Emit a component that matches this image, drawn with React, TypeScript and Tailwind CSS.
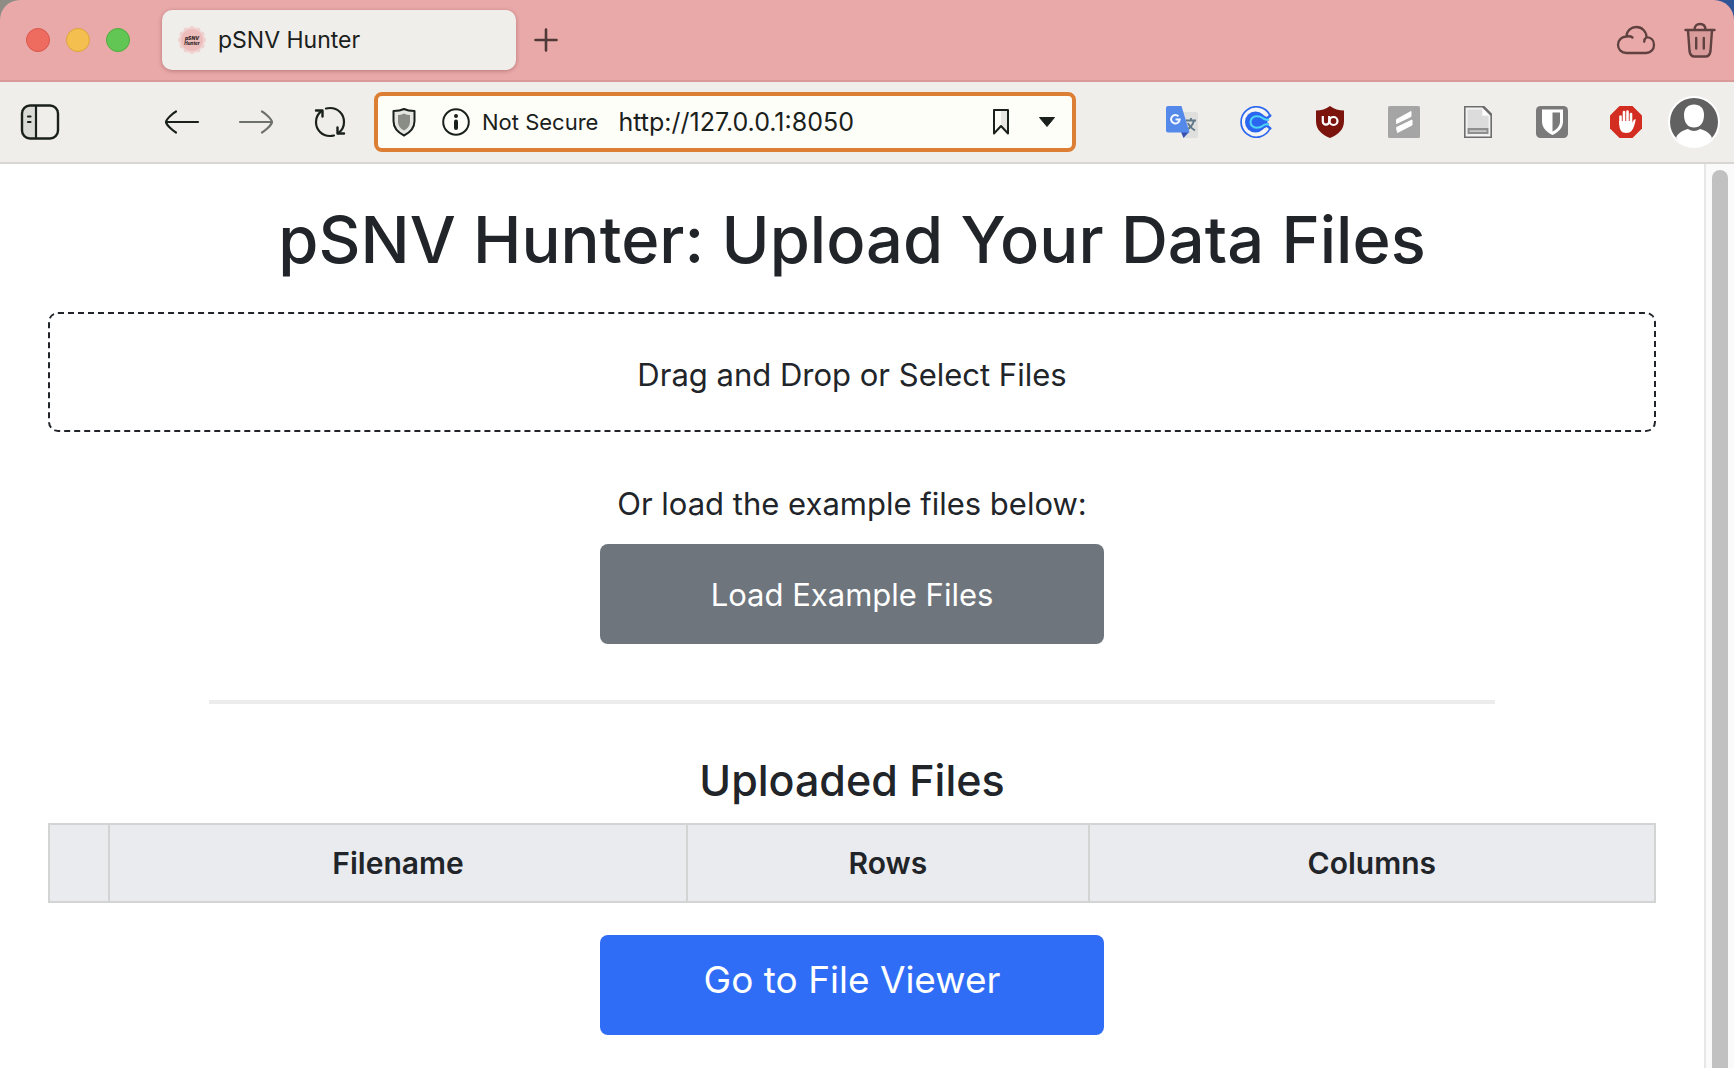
import type { ReactNode } from "react";

const INK = "#1a211c";

function Svg({ w, h, children, className }: { w: number; h: number; children: ReactNode; className?: string }) {
  return (
    <svg width={w} height={h} viewBox={`0 0 ${w} ${h}`} fill="none" aria-hidden="true" className={className ?? "shrink-0"}>
      {children}
    </svg>
  );
}

function Favicon() {
  const petals = Array.from({ length: 12 }, (_, i) => {
    const a = (i * Math.PI) / 6;
    return { x: 14 + 11 * Math.cos(a), y: 15 + 11 * Math.sin(a) };
  });
  return (
    <svg width="28" height="30" viewBox="0 0 28 30" aria-hidden="true" className="shrink-0">
      {petals.map((p, i) => (
        <circle key={i} cx={p.x} cy={p.y} r="3" fill="#efd2cf" />
      ))}
      <circle cx="14" cy="15" r="11" fill="#ecbdbb" />
      <text x="14" y="14.5" textAnchor="middle" fontSize="5" fontWeight="800" fontStyle="italic" fontFamily="Inter, sans-serif" fill="#2b2022">pSNV</text>
      <text x="14" y="19.5" textAnchor="middle" fontSize="4.500" fontWeight="800" fontStyle="italic" fontFamily="Inter, sans-serif" fill="#2b2022">Hunter</text>
    </svg>
  );
}

function TabBar() {
  return (
    <header className="flex h-[82px] items-center rounded-t-[20px] border-b-2 border-[#d99a9a] bg-[#e9a9a8] pl-[26px] pr-[18px]">
      <div className="flex gap-4">
        <button aria-label="Close window" className="size-6 rounded-full border border-[#d9564b] bg-[#ed6b5f]" />
        <button aria-label="Minimise window" className="size-6 rounded-full border border-[#dba33c] bg-[#f5bf4f]" />
        <button aria-label="Zoom window" className="size-6 rounded-full border border-[#4eab3d] bg-[#61c654]" />
      </div>
      <button className="ml-8 flex h-[60px] w-[354px] items-center gap-3 rounded-[10px] bg-[#f0eeea] pl-4 text-left text-[23px] text-[#1a211c] shadow-[0_1px_4px_rgba(90,30,30,0.35)]">
        <Favicon />
        <span>pSNV Hunter</span>
      </button>
      <button aria-label="New tab" className="ml-[18px]">
        <Svg w={24} h={24}>
          <path d="M12 1.5v21M1.5 12h21" stroke="#4f3837" strokeWidth="2.6" strokeLinecap="round" />
        </Svg>
      </button>
      <div className="ml-auto flex items-center gap-7">
        <button aria-label="Synced tabs">
          <Svg w={40} h={30}>
            <path d="M10.5 28C5.500 28 2 24.500 2 19.800C2 15 5.800 11.500 10.500 11.500C10.500 6 15 2 20.500 2C26 2 30.500 6.500 30.500 12.200C35 12.200 38 15.500 38 20C38 24.500 34.500 28 30 28ZM10.500 11.500C13 11 15 11.300 16.500 12.500M30.500 12.200C29 13.200 28.200 14.800 28.200 16.800" stroke="#5f4140" strokeWidth="2.300" strokeLinecap="round" strokeLinejoin="round" />
          </Svg>
        </button>
        <button aria-label="Closed tabs">
          <Svg w={32} h={36}>
            <path d="M3.500 8.500L6 30C6.300 33 8 34.500 10.500 34.500H21.500C24 34.500 25.700 33 26 30L28.500 8.500Z" fill="#d99c9b" />
            <path d="M1.500 8h29M10.500 8C10.500 4 12.500 2 16 2S21.500 4 21.500 8M4 8.500L5.500 29C6 33 8 34.500 10.500 34.500H21.500C24 34.500 26 33 26.500 29L28 8.500M12.200 16v10.500M19.800 16v10.500" stroke="#5f4140" strokeWidth="2.400" strokeLinecap="round" />
          </Svg>
        </button>
      </div>
    </header>
  );
}

function AddressBar() {
  return (
    <div className="ml-7 flex h-[60px] min-w-0 flex-1 items-center rounded-lg border-4 border-[#dc7f34] bg-[#fefef8] pl-[14px] pr-4 text-[#1a211c]">
      <button aria-label="Tracker blocking">
        <Svg w={24} h={30}>
          <path d="M12 2C9 3.500 5.500 4 1.500 4V14C1.500 21 6 25.500 12 28.500C18 25.500 22.500 21 22.500 14V4C18.500 4 15 3.500 12 2Z" fill="#e6e7e2" stroke={INK} strokeWidth="2" strokeLinejoin="round" />
          <path d="M12 6.500C10 7.500 8 8 6 8V14.500C6 19 8.500 21.500 12 23.500C15.500 21.500 18 19 18 14.500V8C16 8 14 7.500 12 6.500Z" fill="#8a8d86" />
        </Svg>
      </button>
      <button className="ml-[26px] flex items-center gap-3 text-[22px] whitespace-nowrap">
        <Svg w={28} h={28}>
          <circle cx="14" cy="14" r="12.800" stroke={INK} strokeWidth="2" />
          <circle cx="14" cy="8" r="2" fill={INK} />
          <path d="M14 13.500v6.500" stroke={INK} strokeWidth="4" strokeLinecap="round" />
        </Svg>
        <span>Not Secure</span>
      </button>
      <input aria-label="Address" defaultValue="http://127.0.0.1:8050" className="ml-5 min-w-0 flex-1 bg-transparent pt-0.5 text-[25px] outline-none" />
      <button aria-label="Bookmark page">
        <Svg w={18} h={28}>
          <path d="M9 2h7v23l-7-7z" fill="#e6e7e2" />
          <path d="M2 2h14v23.500l-7-7.500l-7 7.500z" stroke={INK} strokeWidth="2" strokeLinejoin="round" />
        </Svg>
      </button>
      <button aria-label="Address history" className="ml-7">
        <Svg w={18} h={12}>
          <path d="M1.500 1.500h15l-7.500 9z" fill={INK} stroke={INK} strokeLinejoin="round" />
        </Svg>
      </button>
    </div>
  );
}

const extensions: { name: string; icon: ReactNode }[] = [
  {
    name: "Google Translate",
    icon: (
      <>
        <path d="M12 6h18a2 2 0 0 1 2 2v22a2 2 0 0 1-2 2H18z" fill="#dfdfde" />
        <path d="M20 14.500h10M25 12v2.500M28 14.500c-1 4-4 7.500-7.500 9.500M22 17c1 3 4 5.500 7 7.500" stroke="#607988" strokeWidth="1.900" />
        <path d="M15 26h8l-5.500 6z" fill="#3a50b0" />
        <path d="M2 0h13.500L23.500 26.500H2a2 2 0 0 1-2-2V2a2 2 0 0 1 2-2z" fill="#5489ea" />
        <path d="M12.500 10.200A4.300 4.300 0 1 0 13.700 13.500H9.500" stroke="#f4f7fe" strokeWidth="2" />
      </>
    ),
  },
  {
    name: "Calendly",
    icon: (
      <>
        <circle cx="16" cy="16" r="14" fill="#f4f5f4" />
        <path d="M30 9.500A15.200 15.200 0 1 0 30 22.500" stroke="#2a66f0" strokeWidth="1.700" />
        <path d="M24 7.500L31 9.500V22.500L24 24.500Z" fill="#f0eeea" />
        <path d="M28 11.500L30.300 9.500M28 20.500L30.300 22.500" stroke="#2a66f0" strokeWidth="2.400" strokeLinecap="round" />
        <circle cx="15.500" cy="16" r="10.500" fill="#2a66f0" />
        <path d="M20.500 8L29 12V20L20.500 24Z" fill="#2a66f0" />
        <path d="M29 13.200C26 14.500 24.500 13.700 22.500 12C20.500 10.300 18.500 10.300 16.500 10.300C13 10.300 10.500 13 10.500 16S13 21.700 16.500 21.700C18.500 21.700 20.500 21.700 22.500 20C24.500 18.300 26 17.500 29 18.800" stroke="#4fd6f5" strokeWidth="2.100" />
        <path d="M27.500 16h4.500" stroke="#f0eeea" strokeWidth="2.500" />
      </>
    ),
  },
  {
    name: "uBlock Origin",
    icon: (
      <>
        <path d="M16 0C12 3 7 4.500 2 4.500V15C2 24 8 28.500 16 32C24 28.500 30 24 30 15V4.500C25 4.500 20 3 16 0Z" fill="#7a140d" />
        <path d="M8.800 10V15.500A3.200 3.200 0 0 0 15.200 15.500V10" stroke="#fff" strokeWidth="2.200" />
        <circle cx="19.500" cy="15" r="4" stroke="#fff" strokeWidth="2.200" />
      </>
    ),
  },
  {
    name: "Scribe",
    icon: (
      <>
        <rect width="32" height="32" rx="1.500" fill="#a5a5a5" />
        <path d="M8.500 13.500L23 5.500V10.500L8.500 17.500ZM8.500 21.500L24 14V19L9.500 26.500Z" fill="#fff" stroke="#fff" strokeLinejoin="round" />
      </>
    ),
  },
  {
    name: "Page notes",
    icon: (
      <>
        <path d="M2.800 .8H22L29.200 8V31.200H2.800Z" fill="#f3f3f3" stroke="#6d6d6d" strokeWidth="1.600" />
        <path d="M5.500 3.500H20V10H26.500V22H5.500Z" fill="#dcdcdc" />
        <path d="M21 .8V9H29.200Z" fill="#fff" />
        <path d="M21 .8L29.200 9" stroke="#6d6d6d" strokeWidth="2.200" />
        <path d="M5.500 22h21v6h-21z" fill="#8e8e8e" />
        <path d="M7.500 24.200h17v1.800h-17z" fill="#c9c9c9" />
      </>
    ),
  },
  {
    name: "Bitwarden",
    icon: (
      <>
        <rect width="32" height="32" rx="4.500" fill="#7a7a7a" />
        <path d="M6 3.500H27V15.500C27 22 22 26.500 16.500 29C11 26.500 6 22 6 15.500Z" fill="#fff" />
        <path d="M16.500 6.500H24V15.500C24 20 20.500 23.500 16.500 25.500Z" fill="#7a7a7a" />
      </>
    ),
  },
  {
    name: "AdBlock",
    icon: (
      <>
        <path d="M9.500 0H22.500L32 9.500V22.500L22.500 32H9.500L0 22.500V9.500Z" fill="#d22d20" />
        <path d="M10.500 18V10.500M14 17V6M17.500 17V5.500M21 18V8" stroke="#fff" strokeWidth="2.600" strokeLinecap="round" />
        <path d="M9.200 15H22.300V17.500C23 14.500 24 13 25.800 13.200C25 17 24 22 21.500 25C19.500 27.500 13 28 10.800 24.500C9.200 22 9.200 18 9.200 15Z" fill="#fff" />
      </>
    ),
  },
];

function Toolbar() {
  return (
    <nav aria-label="Browser toolbar" className="flex h-[82px] items-center border-b-2 border-[#d7d6d2] bg-[#f0eeea] pl-5 pr-[14px]">
      <button aria-label="Show panel">
        <Svg w={40} h={36}>
          <path d="M15 2H9C4 2 2 4.500 2 9V27C2 31.500 4 34 9 34H15Z" fill="#dadbd6" />
          <rect x="2" y="1.500" width="36" height="33" rx="8" stroke={INK} strokeWidth="2.400" />
          <path d="M16 2v32" stroke={INK} strokeWidth="2.200" />
          <path d="M8 12.500h2.500M8 18h2.500" stroke={INK} strokeWidth="2.200" strokeLinecap="round" />
        </Svg>
      </button>
      <button aria-label="Back" className="ml-[104px]">
        <Svg w={36} h={26}>
          <path d="M34 13H2M12 2.500C9.500 4 2.500 9.500 2 13C2.500 16.500 9.500 22 12 23.500" stroke={INK} strokeWidth="2.200" strokeLinecap="round" strokeLinejoin="round" />
        </Svg>
      </button>
      <button aria-label="Forward" className="ml-[38px]">
        <Svg w={36} h={26}>
          <path d="M2 13h32M24 2.500C26.500 4 33.500 9.500 34 13C33.500 16.500 26.500 22 24 23.500" stroke="#6d706b" strokeWidth="2.200" strokeLinecap="round" strokeLinejoin="round" />
        </Svg>
      </button>
      <button aria-label="Reload" className="ml-10">
        <Svg w={32} h={32}>
          <path d="M7.500 5C3.500 8 2 12 2 16C2 24 8 30 16 30C17.500 30 18.500 29.800 20 29.500M24.500 27C28.500 24 30 20 30 16C30 8 24 2 16 2C14.500 2 13.500 2.200 12 2.500" stroke={INK} strokeWidth="2.200" strokeLinecap="round" />
          <path d="M2 4.500H8.500V10.500M30 27.500H23.500V21.500" stroke={INK} strokeWidth="2.400" strokeLinecap="round" strokeLinejoin="round" />
        </Svg>
      </button>
      <AddressBar />
      <div className="ml-[90px] flex shrink-0 items-center gap-[42px]">
        {extensions.map((e) => (
          <button key={e.name} aria-label={e.name}>
            <Svg w={32} h={32}>{e.icon}</Svg>
          </button>
        ))}
      </div>
      <button aria-label="Profile" className="ml-[26px]">
        <Svg w={52} h={52}>
          <circle cx="26" cy="26" r="26" fill="#fff" />
          <circle cx="26" cy="26" r="24" fill="#616161" />
          <path d="M16 19C16 12 20 8.500 26 8.500S36 12 36 19C36 27 32 31.500 26 31.500S16 27 16 19Z" fill="#fff" />
          <path d="M8 42C10 36.500 15 34.500 20 33C24 35.500 28 35.500 32 33C37 34.500 42 36.500 44 42C40 48 34 51 26 51S12 48 8 42Z" fill="#fff" />
        </Svg>
      </button>
    </nav>
  );
}

export default function App() {
  return (
    <div className="flex min-h-screen flex-col bg-[linear-gradient(90deg,#8d8d85_50%,#2f5597_50%)] font-['Inter',sans-serif]">
      <TabBar />
      <Toolbar />
      <div className="flex flex-1 bg-white text-[#212529]">
        <main className="flex min-w-0 flex-1 flex-col items-center px-12 pt-[34px] pb-8 text-[31px] leading-[48px]">
          <h1 className="text-[65px] leading-[84px] font-medium">pSNV Hunter: Upload Your Data Files</h1>
          <button className="mt-[30px] h-[120px] w-full rounded-[10px] border-2 border-dashed border-[#212529] pt-1.5">
            Drag and Drop or Select Files
          </button>
          <p className="mt-12">Or load the example files below:</p>
          <button className="mt-4 h-[100px] w-[504px] rounded-lg bg-[#6e757d] pt-0.5 text-white">Load Example Files</button>
          <hr className="mt-14 w-4/5 border-t-4 border-[#ececec]" />
          <h2 className="mt-12 text-[43px] leading-[56px] font-medium">Uploaded Files</h2>
          <table className="mt-[15px] w-full table-fixed border-collapse text-[30px]">
            <thead>
              <tr className="h-[78px] bg-[#eaebef]">
                <th aria-label="Remove" className="w-[60px] border-2 border-[#d3d3d3]" />
                <th className="w-[36%] border-2 border-[#d3d3d3] font-semibold">Filename</th>
                <th className="w-[25%] border-2 border-[#d3d3d3] font-semibold">Rows</th>
                <th className="border-2 border-[#d3d3d3] font-semibold">Columns</th>
              </tr>
            </thead>
          </table>
          <a href="#viewer" className="mt-8 h-[100px] w-[504px] rounded-lg bg-[#2f6df6] pt-[15px] text-center text-[37px] leading-[60px] text-white">
            Go to File Viewer
          </a>
        </main>
        <div className="flex w-[30px] justify-center border-l-2 border-[#e7e7e7] bg-[#fafafa] pt-1.5">
          <div className="w-4 rounded-t-full bg-[#c1c1c1]" />
        </div>
      </div>
    </div>
  );
}
